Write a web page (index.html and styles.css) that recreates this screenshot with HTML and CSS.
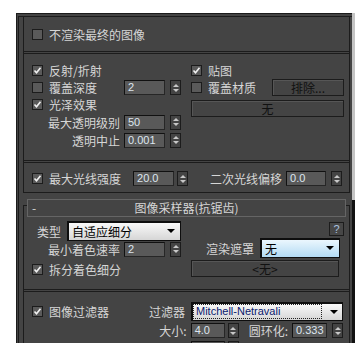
FILE: index.html
```html
<!DOCTYPE html>
<html lang="zh">
<head>
  <meta charset="UTF-8" />
  <title>V-Ray 全局开关</title>
  <link rel="stylesheet" href="styles.css">
</head>
<body>

<div class="wrap">
  <div class="panel">

    <div class="rollout top">
      <div class="sec-a">
        <div class="row"><span class="box"></span><span>不渲染最终的图像</span></div>
      </div>

      <div class="sec-b">
        <div class="col col-l">
          <div class="row"><span class="box on"><svg viewBox="0 0 9 9"><path d="M1.5 4.5l2 2.2 4-5"/></svg></span><span>反射/折射</span></div>
          <div class="row"><span class="box"></span><span>覆盖深度</span><span class="num push">2</span><span class="spin"></span></div>
          <div class="row"><span class="box on"><svg viewBox="0 0 9 9"><path d="M1.5 4.5l2 2.2 4-5"/></svg></span><span>光泽效果</span></div>
          <div class="row end tall"><span class="lbl">最大透明级别</span><span class="num">50</span><span class="spin"></span></div>
          <div class="row end tall"><span class="lbl">透明中止</span><span class="num">0.001</span><span class="spin"></span></div>
        </div>
        <div class="col col-r">
          <div class="row"><span class="box on"><svg viewBox="0 0 9 9"><path d="M1.5 4.5l2 2.2 4-5"/></svg></span><span>贴图</span></div>
          <div class="row"><span class="box"></span><span>覆盖材质</span><span class="btn exclude">排除...</span></div>
          <div class="btn none">无</div>
        </div>
      </div>

      <div class="sec-c">
        <div class="row">
          <span class="box on"><svg viewBox="0 0 9 9"><path d="M1.5 4.5l2 2.2 4-5"/></svg></span><span>最大光线强度</span>
          <span class="num ray">20.0</span><span class="spin near"></span>
          <span class="lbl bias">二次光线偏移</span><span class="num w40">0.0</span><span class="spin"></span>
        </div>
      </div>
    </div>

    <div class="rollout sampler">
      <div class="head"><span class="dash">-</span><span class="title">图像采样器(抗锯齿)</span></div>

      <div class="sec-d">
        <div class="col col-l">
          <div class="row r-type"><span class="lbl">类型</span><div class="select s-type">自适应细分</div></div>
          <div class="row end r-min"><span class="lbl">最小着色速率</span><span class="num">2</span><span class="spin"></span></div>
          <div class="row r-split"><span class="box on"><svg viewBox="0 0 9 9"><path d="M1.5 4.5l2 2.2 4-5"/></svg></span><span>拆分着色细分</span></div>
        </div>
        <div class="col col-r">
          <div class="help">?</div>
          <div class="row end r-mask"><span class="lbl">渲染遮罩</span><div class="select s-mask">无</div></div>
          <div class="btn none2">&lt;无&gt;</div>
        </div>
      </div>

      <div class="sec-e">
        <div class="row r-filter">
          <span class="box on"><svg viewBox="0 0 9 9"><path d="M1.5 4.5l2 2.2 4-5"/></svg></span><span>图像过滤器</span>
          <span class="lbl push">过滤器</span>
          <div class="select s-filter"><span class="focus">Mitchell-Netravali</span></div>
        </div>
        <div class="row end r-size">
          <span class="lbl">大小:</span><span class="num w34">4.0</span><span class="spin near"></span>
          <span class="lbl ring">圆环化:</span><span class="num w35">0.333</span><span class="spin"></span>
        </div>
        <div class="row r-blur">
          <span class="lbl">模糊:</span><span class="num w34">0.333</span><span class="spin near"></span>
        </div>
      </div>
    </div>

  </div>
  <div class="scroll"></div>
</div>

</body>
</html>
```

FILE: styles.css
```css
* {
  box-sizing: border-box;
}
body {
  margin: 0;
  background-color: #fff;
  font-family: "Noto Sans CJK SC", "Liberation Sans", sans-serif;
  font-size: 12px;
  color: #d6d6d6;
  overflow: hidden;
}
.wrap {
  display: flex;
  margin: 13px 0 0 16px;
  height: 330px;
}
.panel {
  width: 336px;
  background-color: #444;
  border-left: 3px double #1c1c1c;
  border-top: 4px double #1c1c1c;
  padding: 0 2px 0 4px;
}
.scroll {
  width: 3px;
  background: linear-gradient(#c4c4c4 0 187px, #111 187px);
}
.rollout {
  border-left: 1px solid #1c1c1c;
  border-right: 1px solid #1c1c1c;
}
.top {
  border-bottom: 1px solid #1c1c1c;
}
.sampler {
  margin-top: 12px;
  border-top: 1px solid #1c1c1c;
}

/* sections */
.sec-a {
  height: 34px;
  padding: 9px 8px 0;
}
.sec-b {
  height: 109px;
  border-top: 3px double #1c1c1c;
  padding-top: 8px;
  display: grid;
  grid-template-columns: 161px 164px;
  align-items: start;
}
.sec-c {
  height: 32px;
  border-top: 3px double #1c1c1c;
  padding: 7px 8px 0;
}
.sec-d {
  height: 72px;
  display: grid;
  grid-template-columns: 161px 164px;
  align-items: start;
}
.sec-e {
  border-top: 3px double #1c1c1c;
  padding: 10px 6px 0 8px;
}
.col {
  display: flex;
  flex-direction: column;
}
.col-l {
  padding: 0 4px 0 8px;
}
.col-r {
  padding: 0 5px 0 6px;
}

/* rollout header */
.head {
  margin: -7px 3px 0;
  height: 18px;
  border: 1px solid #656565;
  background-color: #444;
  display: grid;
  line-height: 16px;
}
.head span {
  grid-area: 1 / 1;
}
.dash {
  justify-self: start;
  padding-left: 4px;
}
.title {
  justify-self: center;
}

/* rows */
.row {
  display: flex;
  align-items: center;
  height: 17px;
  white-space: nowrap;
}
.end {
  justify-content: flex-end;
}
.tall {
  height: 18px;
}
.push {
  margin-left: auto;
}
.lbl {
  margin-right: 4px;
}

/* controls */
.box {
  width: 11px;
  height: 11px;
  flex: none;
  display: flex;
  margin-right: 6px;
  border: 1px solid #1c1c1c;
  background-color: #5a5a5a;
}
.box svg {
  width: 9px;
  height: 9px;
}
.box path {
  fill: none;
  stroke: #f2f2f2;
  stroke-width: 1.6;
}
.num {
  width: 41px;
  height: 15px;
  flex: none;
  padding-left: 3px;
  background-color: #595959;
  border: 1px solid #262626;
  border-top-color: #111;
  border-left-color: #111;
  color: #dde6ef;
  font: 11px/13px "Liberation Sans", sans-serif;
}
.spin {
  width: 11px;
  height: 15px;
  flex: none;
  margin-left: 5px;
  border: 1px solid #1c1c1c;
  display: flex;
  flex-direction: column;
  align-items: center;
  justify-content: center;
  gap: 2px;
}
.spin::before {
  content: "";
  border: 3px solid transparent;
  border-top: 0;
  border-bottom: 3px solid #c8c8c8;
}
.spin::after {
  content: "";
  border: 3px solid transparent;
  border-bottom: 0;
  border-top: 3px solid #c8c8c8;
}
.near {
  margin-left: 3px;
}
.btn {
  height: 17px;
  border: 1px solid #1c1c1c;
  background-color: #444;
  box-shadow: inset 1px 1px 0 #565656;
  color: #111;
  text-align: center;
  line-height: 15px;
}
.exclude {
  width: 72px;
  margin-left: auto;
}
.none {
  width: 153px;
  margin-top: 4px;
}
.none2 {
  width: 148px;
  margin-top: 2px;
}
.help {
  width: 15px;
  height: 14px;
  align-self: flex-end;
  margin-top: 5px;
  border: 1px solid #1c1c1c;
  background-color: #474747;
  color: #a9c3e0;
  font: 11px/12px "Liberation Sans", sans-serif;
  text-align: center;
}
.select {
  display: flex;
  align-items: center;
  height: 100%;
  padding-left: 4px;
  border: 1px solid #0e0e0e;
  box-shadow: inset 1px 1px 0 #0e0e0e;
  background: linear-gradient(#fbfbfb, #d6d6d6);
  color: #000;
}
.select::after {
  content: "";
  margin: 0 5px 0 auto;
  border: 4px solid transparent;
  border-bottom: 0;
  border-top: 4px solid #000;
}

/* sizes */
.ray {
  margin-left: 12px;
}
.bias {
  margin-left: 22px;
}
.w40 {
  width: 40px;
}
.w34 {
  width: 34px;
}
.w35 {
  width: 35px;
}
.ring {
  margin-left: 10px;
}
.r-type {
  height: 20px;
  margin-top: 4px;
  padding-left: 5px;
}
.r-type .lbl {
  margin-right: 6px;
}
.s-type {
  width: 116px;
}
.r-min {
  height: 16px;
}
.r-split {
  margin-top: 4px;
}
.r-mask {
  height: 20px;
  margin-top: 2px;
  margin-right: 4px;
}
.r-mask .lbl {
  margin-right: 6px;
}
.s-mask {
  width: 80px;
  background: linear-gradient(#eef8fe, #b3dbf4);
}
.r-filter {
  height: 19px;
}
.r-filter .lbl {
  margin-right: 6px;
}
.s-filter {
  width: 152px;
  padding: 1px;
  color: #0b1a6e;
  font: 11px "Liberation Sans", sans-serif;
}
.s-filter .focus {
  flex: 1;
  align-self: stretch;
  padding-left: 2px;
  border: 1px dotted #222;
  line-height: 13px;
}
.s-filter::after {
  margin: 0 3px 0 8px;
}
.r-size {
  height: 15px;
  margin-top: 2px;
}
.r-blur {
  height: 15px;
  margin-top: 3px;
  padding-left: 128px;
}
```
